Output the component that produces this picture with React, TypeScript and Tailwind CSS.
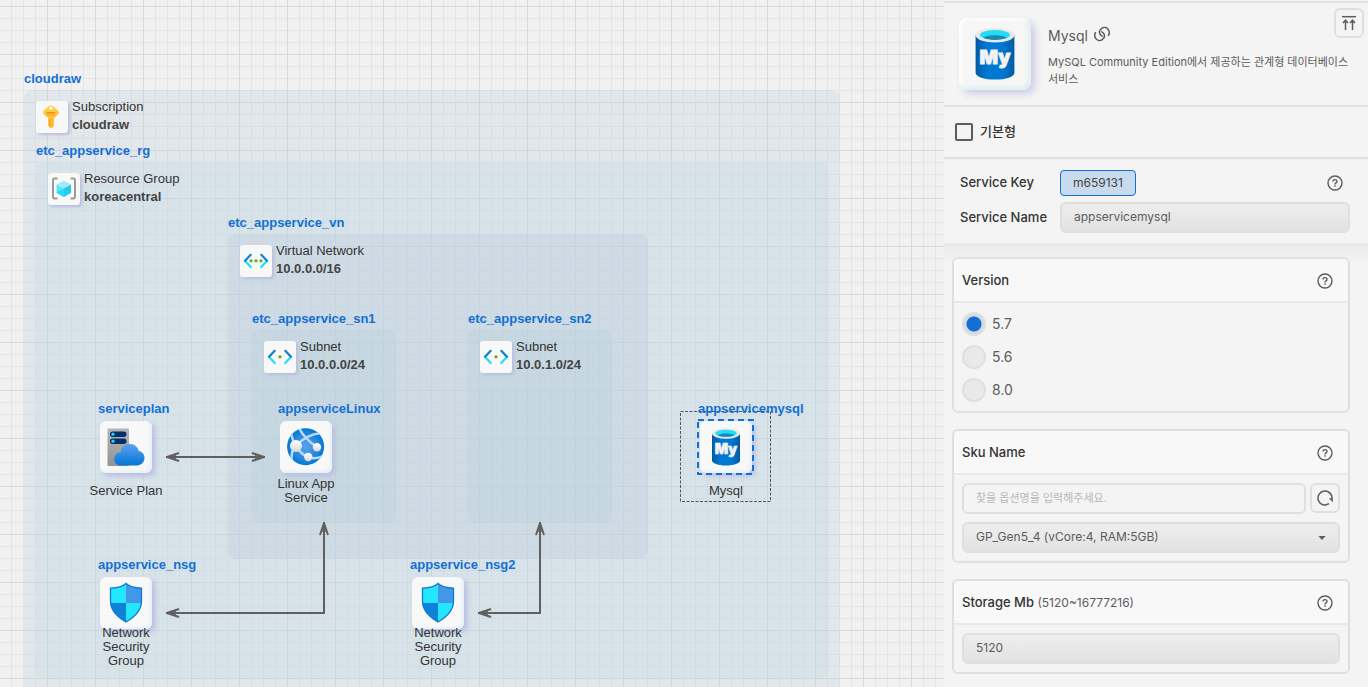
import { useState, type ReactNode } from "react";

const UI = "font-['Inter','Noto_Sans_CJK_KR',sans-serif]";
const ARIAL = "font-['Liberation_Sans',Arial,sans-serif]";
const FIELD =
  "h-[31px] w-full rounded-md border-2 border-[#dfdfdf] px-3 pb-0.5 text-xs text-[#5c5c5c] outline-none";
const FILLED = "bg-linear-to-b from-[#eeeeee] to-[#e2e2e2]";

/* ---------- drawings ---------- */

function KeyIcon() {
  return (
    <svg viewBox="0 0 32 32" className="size-full" aria-hidden="true">
      <defs>
        <linearGradient id="key" x1="0" y1="0" x2="0" y2="1">
          <stop offset="0" stopColor="#ffd24d" />
          <stop offset="1" stopColor="#f9b32c" />
        </linearGradient>
      </defs>
      <path
        d="M15 4.500c1.200 0 2.200.4 3 1.200l4 3.800c1.200 1.200 1.200 2.800 0 4L18.200 17V19l-.7 1 .7 1-.7 1 .7 1-.7 1 .6 1L15 27.500 12.200 25v-8L8 13.500c-1.200-1.200-1.200-2.800 0-4l4-3.800c.8-.8 1.800-1.200 3-1.200z"
        fill="url(#key)"
      />
      <circle cx="15" cy="7.200" r="1.600" fill="#fff" />
      <rect x="10.500" y="11" width="9" height="1.400" rx=".7" fill="#f28c14" />
      <rect x="10.500" y="13.200" width="9" height="1.200" rx=".6" fill="#f9a825" />
      <path d="M13.800 18v6.500" stroke="#f59a18" strokeWidth="1" />
    </svg>
  );
}

function ResourceGroupIcon() {
  return (
    <svg viewBox="0 0 32 32" className="size-full" aria-hidden="true">
      <path
        d="M9.500 5.500H6.800Q5 5.500 5 7.500v16q0 2 1.800 2h2.700M22.500 5.500h2.700q1.800 0 1.800 2v16q0 2-1.800 2h-2.700"
        fill="none"
        stroke="#9a9a9a"
        strokeWidth="2"
      />
      <path d="M15.800 7.800 23 11.500l-7.200 4-7.300-4z" fill="#9cebff" />
      <path d="M8.500 11.500l7.300 4v8.500l-7.300-4.300z" fill="#50e6ff" />
      <path d="M23 11.500l-7.200 4v8.500l7.200-4.300z" fill="#27c7e6" />
      <path d="M8.500 19.700l7.300-4.200V24zM15.800 15.500 23 19.700 15.800 24z" fill="#17d4f4" opacity=".7" />
    </svg>
  );
}

function NetworkIcon({ dots }: { dots: number[] }) {
  return (
    <svg viewBox="0 0 32 32" className="size-full" aria-hidden="true">
      <g fill="none" strokeWidth="2.200" strokeLinecap="round">
        <path d="M10.700 22 5 15.800M21.300 22l5.700-6.200" stroke="#20dffa" />
        <path d="M10.700 9.800 5 15.800M21.300 9.800l5.700 6" stroke="#0f82d8" />
      </g>
      {dots.map((x) => (
        <circle key={x} cx={x} cy="15.800" r="1.600" fill="#5ea82f" />
      ))}
    </svg>
  );
}

function ServicePlanIcon() {
  return (
    <svg viewBox="0 0 52 52" className="size-full" aria-hidden="true">
      <defs>
        <linearGradient id="plan-tower" x1="0" y1="0" x2="0" y2="1">
          <stop offset="0" stopColor="#b5b5b5" />
          <stop offset="1" stopColor="#949494" />
        </linearGradient>
        <linearGradient id="plan-cloud" x1="0" y1="0" x2="0" y2="1">
          <stop offset="0" stopColor="#5ea0ef" />
          <stop offset="1" stopColor="#0078d4" />
        </linearGradient>
      </defs>
      <rect x="7.500" y="7.500" width="21.500" height="37.500" rx="1" fill="url(#plan-tower)" />
      <rect x="10" y="10.500" width="16.500" height="5.500" rx="2.700" fill="#003067" />
      <rect x="10" y="17.500" width="16.500" height="5.500" rx="2.700" fill="#003067" />
      <circle cx="13" cy="13.200" r="1.600" fill="#32d4f5" />
      <circle cx="13" cy="20.200" r="1.600" fill="#32d4f5" />
      <path
        d="M21.500 44.500c-4.300 0-7.300-2.700-7.300-6.600 0-3.700 2.700-6.300 6.300-6.600.6-4.800 4.300-8.300 9.300-8.300 4.500 0 7.800 2.700 9 7 3.300.5 5.700 3.300 5.700 6.800 0 4.200-3.200 7.700-7.500 7.700z"
        fill="url(#plan-cloud)"
      />
    </svg>
  );
}

function AppServiceIcon() {
  return (
    <svg viewBox="0 0 52 52" className="size-full" aria-hidden="true">
      <defs>
        <radialGradient id="app-globe" cx=".5" cy=".5" r=".5">
          <stop offset="0" stopColor="#5ea0ef" />
          <stop offset=".6" stopColor="#2f8ae0" />
          <stop offset="1" stopColor="#0078d4" />
        </radialGradient>
        <linearGradient id="app-dot" x1="0" y1="0" x2="0" y2="1">
          <stop offset="0" stopColor="#fff" />
          <stop offset="1" stopColor="#d6d6d6" />
        </linearGradient>
        <clipPath id="app-clip">
          <circle cx="25.600" cy="25.700" r="18.500" />
        </clipPath>
      </defs>
      <circle cx="25.600" cy="25.700" r="18.500" fill="url(#app-globe)" />
      <g clipPath="url(#app-clip)" fill="none" stroke="#b9dafa" strokeWidth="2.500">
        <path d="M16 25C23 17 31 13 41 12" />
        <path d="M19 7c4 8 10 14 18 19" />
        <path d="M11 10c0 5 2 10 5 15-4 4-5 10-4 15" />
        <path d="M16 25c3 5 7 9 12 11 5 2 11 1 15-1" />
      </g>
      <circle cx="16" cy="25" r="6" fill="url(#app-dot)" />
      <circle cx="37" cy="26.300" r="4.200" fill="url(#app-dot)" />
      <circle cx="28.200" cy="36" r="4.200" fill="url(#app-dot)" />
    </svg>
  );
}

function ShieldIcon({ id }: { id: string }) {
  const outline =
    "M26 6.500c3.800 3.600 9 4.500 15.500 4.700v13C41.500 34 34.500 40 26 45 17.500 40 10.500 34 10.500 24.200v-13c6.500-.2 11.700-1.100 15.500-4.700z";
  return (
    <svg viewBox="0 0 52 52" className="size-full" aria-hidden="true">
      <defs>
        <clipPath id={id}>
          <path d={outline} />
        </clipPath>
      </defs>
      <g clipPath={`url(#${id})`}>
        <rect width="26" height="26" fill="#25e6ff" />
        <rect x="26" width="26" height="26" fill="#4397e8" />
        <rect y="26" width="26" height="26" fill="#0f82d8" />
        <rect x="26" y="26" width="26" height="26" fill="#25e6ff" />
      </g>
      <path d={outline} fill="none" stroke="#0f7ccf" strokeWidth="1.300" />
    </svg>
  );
}

function MysqlIcon({ id }: { id: string }) {
  return (
    <svg viewBox="0 0 52 52" className="size-full" aria-hidden="true">
      <defs>
        <linearGradient id={id} x1="0" y1="0" x2="1" y2="0">
          <stop offset="0" stopColor="#005ba1" />
          <stop offset=".3" stopColor="#0078d4" />
          <stop offset=".7" stopColor="#0078d4" />
          <stop offset="1" stopColor="#005ba1" />
        </linearGradient>
      </defs>
      <path d="M12 12.500v27c0 2.800 6.200 5 14 5s14-2.200 14-5v-27z" fill={`url(#${id})`} />
      <ellipse cx="26" cy="12.500" rx="14" ry="5.200" fill="#e8e8e8" />
      <ellipse cx="26" cy="12.200" rx="10.800" ry="3.500" fill="#25dcf8" />
      <path
        d="M17.500 14.300c2-1.300 5-1.800 8.500-1.800s6.500.5 8.500 1.800c-2 1-5 1.500-8.500 1.500s-6.500-.5-8.500-1.500z"
        fill="#198ab3"
      />
      <text
        x="26"
        y="33"
        textAnchor="middle"
        className="font-['Inter',sans-serif] text-[14px] font-black"
        fill="#f2f2f2"
        stroke="#f2f2f2"
        strokeWidth=".6"
      >
        My
      </text>
    </svg>
  );
}

function HelpIcon() {
  return (
    <svg viewBox="0 0 16 16" className="size-4" fill="none" stroke="#5c5c5c" strokeWidth="1.400" aria-hidden="true">
      <circle cx="8" cy="8" r="7" />
      <path d="M6 6.500C6 5.300 6.800 4.600 8 4.600s2 .7 2 1.800c0 1.400-2 1.500-2 3" />
      <path d="M8 10.300v1.500" />
    </svg>
  );
}

function LinkIcon() {
  return (
    <svg
      viewBox="0 0 16 16"
      className="size-4"
      fill="none"
      stroke="#5c5c5c"
      strokeWidth="1.500"
      strokeLinecap="round"
      aria-hidden="true"
    >
      <path d="M1.500 6.600C.4 8.400.5 10.700 1.700 12.400c1.500 2.200 4.400 2.700 6.500 1.300 2.300-1.500 2.700-4 1.600-6-.5-.9-1.200-1.500-2-1.900" />
      <path d="M14.500 9.400c1.100-1.800 1-4.100-.2-5.800C12.800 1.400 9.900.9 7.800 2.300 5.500 3.800 5.100 6.300 6.200 8.300c.5.9 1.200 1.500 2 1.900" />
    </svg>
  );
}

/* ---------- canvas ---------- */

type GroupProps = {
  place: string;
  name: string;
  kind: string;
  detail: string;
  icon: ReactNode;
};

function Group({ place, name, kind, detail, icon }: GroupProps) {
  return (
    <section className={`absolute rounded-lg ${place}`}>
      <h2 className="absolute bottom-full left-0 mb-[3px] text-[13px] leading-4 font-bold text-[#1270d4]">{name}</h2>
      <div className="flex gap-1 px-3 pt-2">
        <span className="mt-[3px] size-8 shrink-0 rounded-[3px] bg-[#f8f8f8] shadow-[2px_2px_3px_#b9bfe0]">{icon}</span>
        <p className="text-[13px] leading-[18px] whitespace-nowrap text-[#333333]">
          {kind}
          <br />
          <strong className="text-[#444444]">{detail}</strong>
        </p>
      </div>
    </section>
  );
}

type NodeProps = {
  place: string;
  name: string;
  label: string;
  labelGap?: string;
  selected?: boolean;
  icon: ReactNode;
};

function Node({ place, name, label, labelGap = "mt-[11px]", selected, icon }: NodeProps) {
  return (
    <section className={`absolute w-[52px] ${place}`}>
      {selected && (
        <svg className="absolute -top-[10px] -left-5 h-[92px] w-[92px]" aria-hidden="true">
          <rect x=".5" y=".5" width="90" height="90" fill="none" stroke="#555" strokeDasharray="3 1.500" />
        </svg>
      )}
      <h3 className="absolute bottom-full -left-[2px] mb-1 text-[13px] leading-4 font-bold text-[#1270d4]">{name}</h3>
      <div className="relative size-[52px] rounded-md bg-[#f8f8f8] shadow-[3px_3px_5px_#b9bfe0,inset_-2px_-2px_3px_#e6f0f6]">
        {selected && (
          <svg className="absolute -top-[2px] -left-[3px] h-14 w-[58px]" aria-hidden="true">
            <rect x="1" y="1" width="55" height="54" fill="none" stroke="#1270d4" strokeWidth="2" strokeDasharray="6 4" />
          </svg>
        )}
        {icon}
      </div>
      <p
        className={`relative -mx-4 text-center text-[13px] leading-[14px] whitespace-pre-line text-[#333333] ${labelGap}`}
      >
        {label}
      </p>
    </section>
  );
}

function Edges() {
  return (
    <svg
      className="pointer-events-none absolute inset-0 size-full"
      fill="none"
      stroke="#5f5f5f"
      strokeWidth="2"
      aria-hidden="true"
    >
      <defs>
        <marker
          id="tip"
          markerUnits="userSpaceOnUse"
          markerWidth="16"
          markerHeight="12"
          refX="14"
          refY="6"
          orient="auto-start-reverse"
        >
          <path d="M1 2 13 6 1 10" fill="none" stroke="#5f5f5f" strokeWidth="2" strokeLinejoin="round" />
          <path d="M4 4 12 6 4 8z" fill="#5f5f5f" stroke="none" />
        </marker>
      </defs>
      <path d="M166 457H265" markerStart="url(#tip)" markerEnd="url(#tip)" />
      <path d="M166 613H324V522" markerStart="url(#tip)" markerEnd="url(#tip)" />
      <path d="M478 613H540V522" markerStart="url(#tip)" markerEnd="url(#tip)" />
    </svg>
  );
}

function Canvas() {
  return (
    <main
      className={`relative min-w-0 flex-1 overflow-hidden bg-[#f1f1f1] bg-[linear-gradient(to_right,#d9d9d9_1px,transparent_1px),linear-gradient(to_bottom,#d9d9d9_1px,transparent_1px),linear-gradient(to_right,#e5e5e5_1px,transparent_1px),linear-gradient(to_bottom,#e5e5e5_1px,transparent_1px)] bg-[size:48px_48px,48px_48px,12px_12px,12px_12px] bg-[position:47px_6px,47px_6px,11px_6px,11px_6px] ${ARIAL}`}
    >
      <Group
        place="top-[90px] left-6 h-[602px] w-[816px] bg-[#b8cbdc]/25"
        name="cloudraw"
        kind="Subscription"
        detail="cloudraw"
        icon={<KeyIcon />}
      />
      <Group
        place="top-[162px] left-9 h-[517px] w-[792px] bg-[#c4dae4]/35"
        name="etc_appservice_rg"
        kind="Resource Group"
        detail="koreacentral"
        icon={<ResourceGroupIcon />}
      />
      <Group
        place="top-[234px] left-[228px] h-[325px] w-[420px] bg-[#bccbdc]/35"
        name="etc_appservice_vn"
        kind="Virtual Network"
        detail="10.0.0.0/16"
        icon={<NetworkIcon dots={[11, 16, 21]} />}
      />
      <Group
        place="top-[330px] left-[252px] h-[193px] w-36 bg-[#b8d0dc]/35"
        name="etc_appservice_sn1"
        kind="Subnet"
        detail="10.0.0.0/24"
        icon={<NetworkIcon dots={[16]} />}
      />
      <Group
        place="top-[330px] left-[468px] h-[193px] w-36 bg-[#b8d0dc]/35"
        name="etc_appservice_sn2"
        kind="Subnet"
        detail="10.0.1.0/24"
        icon={<NetworkIcon dots={[16]} />}
      />
      <Edges />
      <Node place="top-[421px] left-[100px]" name="serviceplan" label="Service Plan" icon={<ServicePlanIcon />} />
      <Node
        place="top-[421px] left-[280px]"
        name="appserviceLinux"
        label={"Linux App\nService"}
        labelGap="mt-1"
        icon={<AppServiceIcon />}
      />
      <Node
        place="top-[421px] left-[700px]"
        name="appservicemysql"
        label="Mysql"
        selected
        icon={<MysqlIcon id="mysql-node" />}
      />
      <Node
        place="top-[577px] left-[100px]"
        name="appservice_nsg"
        label={"Network\nSecurity\nGroup"}
        labelGap="-mt-[3px]"
        icon={<ShieldIcon id="shield-a" />}
      />
      <Node
        place="top-[577px] left-[412px]"
        name="appservice_nsg2"
        label={"Network\nSecurity\nGroup"}
        labelGap="-mt-[3px]"
        icon={<ShieldIcon id="shield-b" />}
      />
    </main>
  );
}

/* ---------- settings panel ---------- */

function HelpButton({ topic }: { topic: string }) {
  return (
    <button type="button" aria-label={`${topic} help`}>
      <HelpIcon />
    </button>
  );
}

function Card({ title, hint, children }: { title: string; hint?: string; children: ReactNode }) {
  return (
    <section className="rounded-md border-2 border-[#dfdfdf]">
      <header className="flex h-11 items-center justify-between rounded-t border-b-2 border-[#e8e8e8] bg-[#f8f8f8] pt-0.5 pr-[15px] pl-2">
        <h2 className="text-[13px] font-medium text-[#333333]">
          {title} {hint && <span className="text-xs font-normal text-[#5c5c5c]">{hint}</span>}
        </h2>
        <HelpButton topic={title} />
      </header>
      {children}
    </section>
  );
}

function Panel() {
  const [version, setVersion] = useState("5.7");
  return (
    <aside className={`flex w-[424px] shrink-0 flex-col bg-[#f4f4f4] pt-px shadow-[0_0_2px_#bbbbbb] ${UI}`}>
      <header className="relative flex gap-[17px] border-y-2 border-[#e2e2e2] px-[15px] py-[15px]">
        <span className="size-[72px] shrink-0 rounded-lg bg-[#f6f6f6] shadow-[4px_4px_7px_#cfcde6,inset_-3px_-3px_4px_#e2edf3,inset_2px_2px_4px_#ffffff]">
          <MysqlIcon id="mysql-head" />
        </span>
        <div className="-mr-2 pt-2">
          <div className="flex items-center gap-[6px]">
            <h1 className="text-sm leading-5 text-[#5c5c5c]">Mysql</h1>
            <a href="#docs" aria-label="Documentation" className="mb-1">
              <LinkIcon />
            </a>
          </div>
          <p className="mt-2 text-[11px] leading-[17px] text-[#5c5c5c]">
            MySQL Community Edition에서 제공하는 관계형 데이터베이스 서비스
          </p>
        </div>
        <button
          type="button"
          aria-label="Collapse to top"
          className="absolute top-[5px] right-1 flex size-[30px] items-center justify-center rounded-md border-2 border-[#dfdfdf]"
        >
          <svg viewBox="0 0 16 16" className="size-4" fill="none" stroke="#5c5c5c" strokeWidth="1.500" aria-hidden="true">
            <path d="M1 1.700h14" />
            <path d="M4.500 15V5.500M2 8l2.500-2.800L7 8M11.500 15V5.500M9 8l2.500-2.800L14 8" />
          </svg>
        </button>
      </header>

      <label className="flex h-[52px] shrink-0 items-center gap-[7px] border-b-2 border-[#dfdfdf] px-[11px] text-[13px] font-medium text-[#333333]">
        <input
          type="checkbox"
          className="size-[18px] appearance-none rounded-[2px] border-2 border-[#5c5c5c] checked:bg-[#5c5c5c]"
        />
        기본형
      </label>

      <div className="grid grid-cols-[100px_1fr] items-center gap-y-[6px] pt-[11px] pr-[18px] pb-[10px] pl-4 text-[13px] font-medium text-[#333333]">
        <span>Service Key</span>
        <div className="flex items-center justify-between pr-[7px]">
          <output className="flex h-[26px] items-center rounded border border-[#1270d4] bg-[#c8daee] px-3 text-xs font-normal text-[#444444]">
            m659131
          </output>
          <HelpButton topic="Service Key" />
        </div>
        <label htmlFor="service-name">Service Name</label>
        <input id="service-name" defaultValue="appservicemysql" className={`${FIELD} ${FILLED} font-normal`} />
      </div>

      <div className="flex min-h-0 flex-1 flex-col gap-4 bg-linear-to-b from-[#e9e9e9] to-[#f4f4f4] to-[20px] pt-[14px] pr-[18px] pl-2">
        <Card title="Version">
          <div role="radiogroup" aria-label="Version" className="flex flex-col gap-[9px] px-2 py-[9px]">
            {["5.7", "5.6", "8.0"].map((v) => (
              <div key={v} className="flex h-6 items-center gap-[6px] text-sm text-[#5c5c5c]">
                <input
                  id={`version-${v}`}
                  type="radio"
                  name="version"
                  checked={version === v}
                  onChange={() => setVersion(v)}
                  className="size-6 appearance-none rounded-full border-2 border-[#dfdfdf] bg-[#e9e9e9] checked:bg-[radial-gradient(circle,#1270d4_7px,#d4dbe4_8px)]"
                />
                <label htmlFor={`version-${v}`}>{v}</label>
              </div>
            ))}
          </div>
        </Card>
        <Card title="Sku Name">
          <div className="flex flex-col gap-2 p-2">
            <div className="flex gap-1">
              <input
                aria-label="Sku search"
                placeholder="찾을 옵션명을 입력해주세요."
                className={`${FIELD} min-w-0 flex-1 bg-transparent placeholder:text-[11px] placeholder:text-[#b8b8b8]`}
              />
              <button
                type="button"
                aria-label="Reset"
                className="flex size-[30px] shrink-0 items-center justify-center rounded-md border-2 border-[#dfdfdf]"
              >
                <svg viewBox="0 0 16 16" className="size-4" fill="none" stroke="#5c5c5c" strokeWidth="1.500" aria-hidden="true">
                  <path d="M12 13.700A7 7 0 1 1 14.900 9" />
                  <path d="M11.800 8.300h4v4z" fill="#5c5c5c" stroke="none" />
                </svg>
              </button>
            </div>
            <div className="relative">
              <select aria-label="Sku Name" className={`${FIELD} ${FILLED} appearance-none`}>
                <option>GP_Gen5_4 (vCore:4, RAM:5GB)</option>
              </select>
              <svg
                viewBox="0 0 8 4"
                className="pointer-events-none absolute top-[14px] right-[14px] h-1 w-2"
                fill="#5c5c5c"
                aria-hidden="true"
              >
                <path d="M.5 0h7L4 4z" />
              </svg>
            </div>
          </div>
        </Card>
        <Card title="Storage Mb" hint="(5120~16777216)">
          <div className="p-2">
            <input aria-label="Storage Mb" defaultValue="5120" className={`${FIELD} ${FILLED}`} />
          </div>
        </Card>
      </div>
    </aside>
  );
}

export default function App() {
  return (
    <div className="flex h-screen overflow-hidden">
      <Canvas />
      <Panel />
    </div>
  );
}
